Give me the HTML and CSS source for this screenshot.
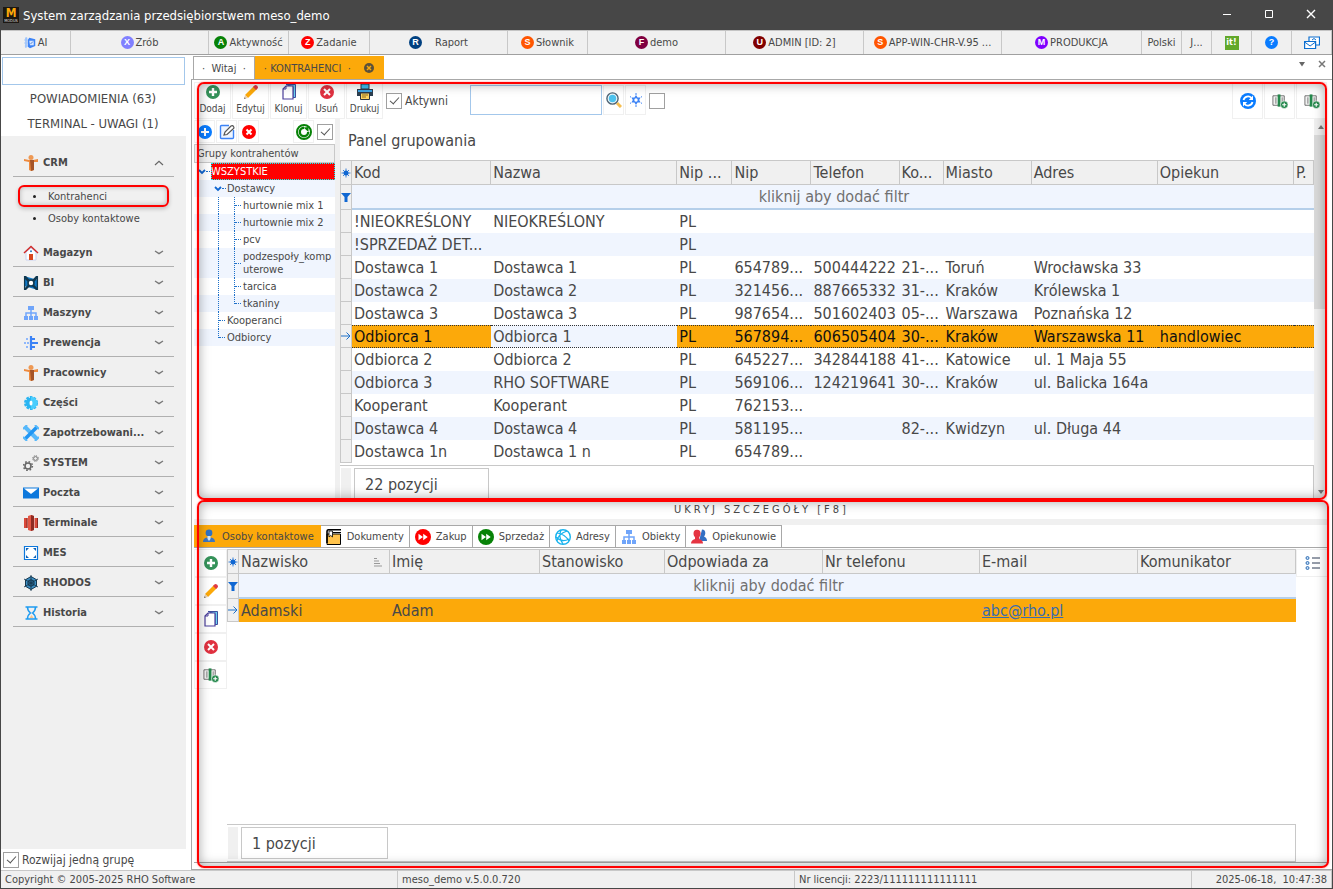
FILE: index.html
```
<!DOCTYPE html>
<html lang="pl">
<head>
    <meta charset="UTF-8">
    <meta name="viewport" content="width=device-width, initial-scale=1.0">
    <title>System zarządzania przedsiębiorstwem meso_demo</title>
    <link rel="stylesheet" href="styles.css">
</head>
<body>
    <svg class="sprite" aria-hidden="true">
        <symbol id="plus-green" viewBox="0 0 16 16"><circle cx="8" cy="8" r="7" fill="#35925a"/><path d="M8 4v8M4 8h8" stroke="#fff" stroke-width="2.4"/></symbol>
        <symbol id="plus-blue" viewBox="0 0 16 16"><circle cx="8" cy="8" r="7" fill="#0a7cff"/><path d="M8 4v8M4 8h8" stroke="#fff" stroke-width="2"/></symbol>
        <symbol id="cross-red" viewBox="0 0 16 16"><circle cx="8" cy="8" r="7" fill="#e03140"/><path d="M5 5l6 6M11 5l-6 6" stroke="#fff" stroke-width="2"/></symbol>
        <symbol id="cross-pure" viewBox="0 0 16 16"><circle cx="8" cy="8" r="7" fill="#f00"/><path d="M5.5 5.5l5 5M10.500 5.500l-5 5" stroke="#fff" stroke-width="2"/></symbol>
        <symbol id="pencil" viewBox="0 0 16 16"><path d="M2 11L11 2l3 3-9 9z" fill="#fca90a"/><path d="M10 3l2-2q3 0 3 3l-2 2z" fill="#e03a44"/><path d="M2 11l3 3-4 1z" fill="#ead0b0"/><path d="M1 15l.6-1.800 1.200 1.200z" fill="#666"/></symbol>
        <symbol id="copy" viewBox="0 0 16 16"><path d="M5 .500h9.500v13H12V3z" fill="#6cd3f0" stroke="#3d4f9f"/><path d="M2 5l3-3h7v13H2z" fill="#fff" stroke="#4b3f9b" stroke-width="1.200"/><path d="M2 5h3V2" fill="none" stroke="#4b3f9b"/></symbol>
        <symbol id="printer" viewBox="0 0 16 16"><path d="M4 0h8v5H4z" fill="#41bff2" stroke="#2a3440"/><path d="M0 5h16v7H0z" fill="#2c3e50"/><path d="M1 6h14v2H1z" fill="#3da4e4"/><path d="M3.500 9h9v6.500h-9z" fill="#fcd462" stroke="#2a3440"/><path d="M5 11h6M5 13h4" stroke="#8b6c20"/></symbol>
        <symbol id="search" viewBox="0 0 16 16"><path d="M11 11l4 4" stroke="#f6be4f" stroke-width="3"/><circle cx="6.500" cy="6.500" r="5.600" fill="#e9f5fa" stroke="#4f6475" stroke-width="1.400"/><circle cx="6.500" cy="6.500" r="3.700" fill="#4cc2ee"/></symbol>
        <symbol id="star" viewBox="0 0 16 16"><path d="M8 3l1.600 2.400h3L11.200 8l1.400 2.600h-3L8 13l-1.600-2.400h-3L4.800 8 3.400 5.400h3z" fill="#3c83f6"/><circle cx="8" cy="8" r="1.700" fill="#fff"/><path d="M8 1v2M8 13v2M2 4.500l1 .7M14 4.500l-1 .7M2 11.500l1-.7M14 11.500l-1-.7" stroke="#3c83f6"/></symbol>
        <symbol id="sync" viewBox="0 0 16 16"><circle cx="8" cy="8" r="8" fill="#0a7cff"/><path d="M3.500 7a4.600 4.600 0 0 1 8-2M12.500 9a4.600 4.600 0 0 1-8 2" fill="none" stroke="#fff" stroke-width="1.800"/><path d="M13 2.500V7H8.800zM3 13.500V9h4.200z" fill="#fff"/></symbol>
        <symbol id="refresh" viewBox="0 0 16 16"><circle cx="8" cy="8" r="7" fill="#fff" stroke="#078207" stroke-width="2"/><path d="M8 3.800A4.200 4.200 0 1 0 12.200 8" fill="none" stroke="#078207" stroke-width="2.400"/><path d="M7.500 3.500L12.500 3v5z" fill="#078207"/></symbol>
        <symbol id="columns" viewBox="0 0 17 16"><path d="M1 2.500h12v10H1z" fill="#fff" stroke="#666"/><path d="M3 4h2v7H3zM10 4h2v7h-2z" fill="#aaa"/><path d="M6 1h3v13H6z" fill="#24884c"/><circle cx="13" cy="12" r="4" fill="#24884c" stroke="#fff" stroke-width=".6"/><path d="M13 9.800v4.400M10.800 12h4.400" stroke="#fff" stroke-width="1.200"/></symbol>
        <symbol id="edit-box" viewBox="0 0 16 16"><path d="M14.500 6v7.500q0 1-1 1h-11q-1 0-1-1v-11q0-1 1-1H10" fill="#eef5ff" stroke="#3c83f6" stroke-width="1.400"/><path d="M5 11l1-3 6-6q1.500-1 2.500.500t-.500 2.500L8 10.500z" fill="#fff" stroke="#555" stroke-width="1.200"/></symbol>
        <symbol id="burst" viewBox="0 0 10 10"><circle cx="5" cy="5" r="2.500" fill="#1067d2"/><path d="M5 .500v9M.5 5h9M2 2l6 6M8 2l-6 6" stroke="#1067d2" stroke-width=".8"/></symbol>
        <symbol id="funnel" viewBox="0 0 10 10"><path d="M0 1h10L6.500 5v5h-3V5z" fill="#1067d2"/></symbol>
        <symbol id="arrow" viewBox="0 0 10 10"><path d="M0 5h9M5.500 1.500L9 5 5.500 8.500" fill="none" stroke="#1d70c9"/></symbol>
        <symbol id="down" viewBox="0 0 10 6"><path d="M1 1l4 2.600L9 1" fill="none" stroke="#777" stroke-width="1.300"/></symbol>
        <symbol id="up" viewBox="0 0 10 6"><path d="M1 5l4-3.600L9 5" fill="none" stroke="#666" stroke-width="1.200"/></symbol>
        <symbol id="node" viewBox="0 0 8 6"><path d="M1 1l3 3 3-3" fill="none" stroke="#1067d2" stroke-width="1.800"/></symbol>
        <symbol id="person" viewBox="0 0 16 16"><circle cx="8" cy="2.500" r="2.500" fill="#ee9853"/><path d="M1 4l5 1h4l5-1v3h-4v8l-3 1-2-1V7l-5-1z" fill="#ee8a3e"/><path d="M7 5h4v10l-3 1z" fill="#a55428"/></symbol>
        <symbol id="house" viewBox="0 0 16 16"><path d="M3 7v8h10V7L8 3z" fill="#fff" stroke="#c9d2f0"/><path d="M1 8l7-6.500L15 8" fill="none" stroke="#cf2b2b" stroke-width="1.500"/><path d="M6 9h4v6H6z" fill="#d9471f"/><circle cx="8" cy="6.300" r="1" fill="#2a7ec2"/></symbol>
        <symbol id="bi" viewBox="0 0 16 16"><path d="M1 1l14 4v10L1 11z" fill="#0f79c7"/><path d="M1 1h2l12 13v1h-2L1 3zM15 1h-2L1 14v1h2L15 3z" fill="#10384f"/><circle cx="8" cy="8" r="3" fill="#fff" stroke="#10384f" stroke-width="1.600"/><path d="M1.600 1v14M14.400 1v14" stroke="#10384f" stroke-width="1.300"/></symbol>
        <symbol id="orgtree" viewBox="0 0 16 16"><path d="M5 1h6v4H5zM1 11h4v4H1zM6 11h4v4H6zM11 11h4v4h-4z" fill="#70a5fa"/><path d="M8 5v6M3 11V8h10v3" fill="none" stroke="#70a5fa" stroke-width="1.500"/></symbol>
        <symbol id="flow" viewBox="0 0 16 16"><path d="M8 1v14M8 8h7M8 4h4M8 12h4" stroke="#3c83f6" stroke-width="2.200"/><path d="M1 8h5M3 4h3M3 12h3" stroke="#8fb8fb" stroke-width="2" stroke-dasharray="2 1"/></symbol>
        <symbol id="gear" viewBox="0 0 16 16"><circle cx="8" cy="8" r="5.500" fill="#2ab5f2" stroke="#2ab5f2" stroke-width="3" stroke-dasharray="2.400 1.056"/><path d="M8 1.800a6.200 6.200 0 0 1 0 12.400z" fill="#4acdfd"/><ellipse cx="8" cy="8" rx="1.500" ry="2.500" fill="#fff"/></symbol>
        <symbol id="tools" viewBox="0 0 16 16"><path d="M2 2l12 12" stroke="#56b8fb" stroke-width="4"/><path d="M14 2L2 14" stroke="#2196f3" stroke-width="3.600"/><path d="M0 4l4-4M12 16l4-4M12 0l4 4M0 12l4 4" stroke="#56b8fb" stroke-width="2"/></symbol>
        <symbol id="cogs" viewBox="0 0 16 16"><circle cx="5" cy="11" r="3" fill="none" stroke="#666" stroke-width="1.600"/><circle cx="5" cy="11" r="4.400" fill="none" stroke="#666" stroke-width="1.500" stroke-dasharray="1.600 1.860"/><circle cx="12.500" cy="3.500" r="1.900" fill="none" stroke="#777"/><circle cx="12.500" cy="3.500" r="2.900" fill="none" stroke="#777" stroke-dasharray="1.100 1.180"/></symbol>
        <symbol id="mail" viewBox="0 0 16 16"><path d="M0 2.500h16v11H0z" fill="#0d78dc"/><path d="M1 3.500h14L8 9z" fill="#fff"/></symbol>
        <symbol id="servers" viewBox="0 0 16 16"><path d="M1 3h3.500v10H1zM11.500 3H15v10h-3.500z" fill="#d9493a"/><path d="M5 1l3-1 3 1v14l-3 1-3-1z" fill="#e35745"/><path d="M8 0l3 1v14l-3 1zM3.500 3h1v10h-1zM14 3h1v10h-1z" fill="#8e2b22"/></symbol>
        <symbol id="mes" viewBox="0 0 16 16"><path d="M1.500 1.500h13v13h-13z" fill="#fff" stroke="#0d78dc" stroke-width="1.200"/><path d="M3 6V3h3zM13 6V3h-3zM3 10v3h3zM13 10v3h-3z" fill="#0d62b8"/></symbol>
        <symbol id="wheel" viewBox="0 0 16 16"><path d="M8 1.500l5.500 3.200v6.600L8 14.500l-5.500-3.200V4.700z" fill="#3d8fc4" stroke="#16384f"/><circle cx="8" cy="8" r="3.200" fill="#2a668e" stroke="#16384f"/><path d="M8 0v16M1 4l14 8M15 4L1 12" stroke="#16384f" stroke-width=".9"/></symbol>
        <symbol id="hourglass" viewBox="0 0 16 16"><path d="M2.500 2h12M2.500 14h12M4.500 2q0 4 3 6-3 2-3 6M12.500 2q0 4-3 6 3 2 3 6" fill="none" stroke="#1e9bf0" stroke-width="1.500"/><path d="M8.500 10l2 3h-4z" fill="#f9c48b"/></symbol>
        <symbol id="user" viewBox="0 0 16 16"><circle cx="8" cy="4" r="3.400" fill="#2f72c4"/><path d="M2 13q0-4 4-4.500l2 1.500 2-1.500q4 .500 4 4.500z" fill="#3e77bf"/><path d="M6.500 7h3v3L8 12l-1.500-2z" fill="#d6e6f7"/></symbol>
        <symbol id="folder" viewBox="0 0 16 16"><path d="M1 5h13.500v10.500H1z" fill="#ffc34c" stroke="#000"/><path d="M1 14V2.500Q1 .700 3 .700h12" fill="none" stroke="#000" stroke-width="1.600"/><path d="M7 3.500h8" stroke="#000"/><path d="M3 2h3.500v6L4.700 6.500 3 8z" fill="#fff" stroke="#000" stroke-width=".8"/></symbol>
        <symbol id="ff" viewBox="0 0 16 16"><circle cx="8" cy="8" r="8" fill="currentColor"/><path d="M3.500 4.800L8 8l-4.500 3.200zM8.200 4.800L12.700 8l-4.500 3.200z" fill="#fff"/></symbol>
        <symbol id="globe" viewBox="0 0 16 16"><circle cx="8" cy="8" r="7.300" fill="#fff" stroke="#18b3ee" stroke-width="1.400"/><path d="M2 4q8 1 12 8M2 12Q3 5 12 2M6 1q-3 7 2 14M1 8q6 6 13 2" fill="none" stroke="#18b3ee" stroke-width="1.200"/></symbol>
        <symbol id="people" viewBox="0 0 16 16"><path d="M11 .5q3.500 0 3.300 4-.2 2-1.300 3 3 1 3 4.500H8z" fill="#3470c4"/><path d="M6 .8q3.800 0 3.600 4.200-.2 2-1.400 3.200V10q3.800 1 3.800 4.500H0Q0 11 4 10V8.200Q2.600 7 2.500 5 2.400.800 6 .800z" fill="#e53442"/></symbol>
        <symbol id="list" viewBox="0 0 16 16"><g fill="#bcd9f5" stroke="#3571b5"><circle cx="2.500" cy="3" r="1.500"/><circle cx="2.500" cy="8" r="1.500"/><circle cx="2.500" cy="13" r="1.500"/></g><path d="M7 3h8M7 8h8M7 13h8" stroke="#2c3b55"/></symbol>
        <symbol id="cube" viewBox="0 0 16 16"><path d="M7 1l8 2v9l-7 3-3-2V4z" fill="#3c83f6"/><path d="M2 1h2L3 14H2zM0 4h5M0 8h5M1 12h4" stroke="#9cc3fb" fill="#9cc3fb"/><path d="M7 5h6v6H8z" fill="#d6e6ff"/><path d="M8.500 9.500L12 6" stroke="#2462cc"/></symbol>
        <symbol id="mails" viewBox="0 0 16 16"><path d="M5 6V2h10.500v8H12" fill="#fff" stroke="#0d6fd0" stroke-width="1.200"/><path d="M.6 6.500h11v7H.600z" fill="#fff" stroke="#0d6fd0" stroke-width="1.200"/><path d="M.6 7l5.500 4 5.500-4M8 5l2-1.500L12 5" fill="none" stroke="#0d6fd0"/></symbol>
        <symbol id="sort" viewBox="0 0 10 10"><path d="M1 1.500h3M1 4h5M1 6.500h6M1 9h8" stroke="#999"/></symbol>
    </svg>

    <header class="titlebar">
        <span class="logo"><b>M</b><i>MODUS</i></span>
        <h1>System zarządzania przedsiębiorstwem meso_demo</h1>
        <div class="window-buttons">
            <button type="button" aria-label="Minimalizuj"><svg viewBox="0 0 10 10"><path d="M1 5.500h8" stroke="#fff"/></svg></button>
            <button type="button" aria-label="Maksymalizuj"><svg viewBox="0 0 10 10"><path d="M1.500 1.500h7v7h-7z" fill="none" stroke="#fff"/></svg></button>
            <button type="button" aria-label="Zamknij"><svg viewBox="0 0 10 10"><path d="M1 1l8 8M9 1l-8 8" stroke="#fff" stroke-width="1.400"/></svg></button>
        </div>
    </header>

    <nav class="menubar">
        <button type="button"><svg class="icon small"><use href="#cube"/></svg>AI</button>
        <button type="button"><span class="badge violet">X</span>Zrób</button>
        <button type="button"><span class="badge green">A</span>Aktywność</button>
        <button type="button"><span class="badge red">Z</span>Zadanie</button>
        <button type="button" class="wide-gap"><span class="badge navy">R</span>Raport</button>
        <button type="button"><span class="badge orange">S</span>Słownik</button>
        <button type="button"><span class="badge plum">F</span>demo</button>
        <button type="button"><span class="badge maroon">U</span>ADMIN [ID: 2]</button>
        <button type="button"><span class="badge orange">S</span>APP-WIN-CHR-V.95 ...</button>
        <button type="button"><span class="badge purple">M</span>PRODUKCJA</button>
        <button type="button">Polski</button>
        <button type="button">J...</button>
        <button type="button"><span class="it-logo">it!</span></button>
        <button type="button"><span class="badge blue">?</span></button>
        <button type="button" aria-label="Wiadomości"><svg class="icon"><use href="#mails"/></svg></button>
    </nav>

    <div class="workspace">
        <aside class="sidebar">
            <input type="text" class="side-search" aria-label="Szukaj w menu">
            <a href="#" class="notice">POWIADOMIENIA (63)</a>
            <a href="#" class="notice">TERMINAL - UWAGI (1)</a>
            <nav class="side-nav">
                <button type="button" class="group"><svg class="icon"><use href="#person"/></svg><span>CRM</span><svg class="chevron"><use href="#up"/></svg></button>
                <ul class="subnav">
                    <li class="marked"><a href="#">Kontrahenci</a></li>
                    <li><a href="#">Osoby kontaktowe</a></li>
                </ul>
                <button type="button" class="group"><svg class="icon"><use href="#house"/></svg><span>Magazyn</span><svg class="chevron"><use href="#down"/></svg></button>
                <button type="button" class="group"><svg class="icon"><use href="#bi"/></svg><span>BI</span><svg class="chevron"><use href="#down"/></svg></button>
                <button type="button" class="group"><svg class="icon"><use href="#orgtree"/></svg><span>Maszyny</span><svg class="chevron"><use href="#down"/></svg></button>
                <button type="button" class="group"><svg class="icon"><use href="#flow"/></svg><span>Prewencja</span><svg class="chevron"><use href="#down"/></svg></button>
                <button type="button" class="group"><svg class="icon"><use href="#person"/></svg><span>Pracownicy</span><svg class="chevron"><use href="#down"/></svg></button>
                <button type="button" class="group"><svg class="icon"><use href="#gear"/></svg><span>Części</span><svg class="chevron"><use href="#down"/></svg></button>
                <button type="button" class="group"><svg class="icon"><use href="#tools"/></svg><span>Zapotrzebowani...</span><svg class="chevron"><use href="#down"/></svg></button>
                <button type="button" class="group"><svg class="icon"><use href="#cogs"/></svg><span>SYSTEM</span><svg class="chevron"><use href="#down"/></svg></button>
                <button type="button" class="group"><svg class="icon"><use href="#mail"/></svg><span>Poczta</span><svg class="chevron"><use href="#down"/></svg></button>
                <button type="button" class="group"><svg class="icon"><use href="#servers"/></svg><span>Terminale</span><svg class="chevron"><use href="#down"/></svg></button>
                <button type="button" class="group"><svg class="icon"><use href="#mes"/></svg><span>MES</span><svg class="chevron"><use href="#down"/></svg></button>
                <button type="button" class="group"><svg class="icon"><use href="#wheel"/></svg><span>RHODOS</span><svg class="chevron"><use href="#down"/></svg></button>
                <button type="button" class="group"><svg class="icon"><use href="#hourglass"/></svg><span>Historia</span><svg class="chevron"><use href="#down"/></svg></button>
            </nav>
            <div class="expand-one"><input type="checkbox" id="expandOne" checked><label for="expandOne">Rozwijaj jedną grupę</label></div>
        </aside>

        <main class="content">
            <div class="doc-tabs">
                <button type="button" class="doc-tab">·&nbsp; Witaj &nbsp;·</button>
                <button type="button" class="doc-tab active">· KONTRAHENCI &nbsp;·
                    <svg class="tab-close" viewBox="0 0 12 12"><circle cx="6" cy="6" r="5" fill="#5c513a"/><path d="M4 4l4 4M8 4L4 8" stroke="#fca90a" stroke-width="1.500"/></svg>
                </button>
                <div class="doc-tools">
                    <button type="button" aria-label="Lista zakładek"><svg viewBox="0 0 10 10"><path d="M2 3h6L5 7.500z" fill="#666"/></svg></button>
                    <button type="button" aria-label="Zamknij zakładkę"><svg viewBox="0 0 10 10"><path d="M2 2l6 6M8 2L2 8" stroke="#777" stroke-width="1.500"/></svg></button>
                </div>
            </div>

            <div class="doc-body">
                <section class="master">
                    <div class="toolbar">
                        <button type="button" class="tool"><svg class="icon"><use href="#plus-green"/></svg>Dodaj</button>
                        <button type="button" class="tool"><svg class="icon"><use href="#pencil"/></svg>Edytuj</button>
                        <button type="button" class="tool"><svg class="icon"><use href="#copy"/></svg>Klonuj</button>
                        <button type="button" class="tool"><svg class="icon"><use href="#cross-red"/></svg>Usuń</button>
                        <button type="button" class="tool"><svg class="icon"><use href="#printer"/></svg>Drukuj</button>
                        <div class="active-only"><input type="checkbox" id="activeOnly" checked><label for="activeOnly">Aktywni</label></div>
                        <input type="text" class="find" aria-label="Szukaj">
                        <button type="button" class="find-btn" aria-label="Szukaj"><svg class="icon"><use href="#search"/></svg></button>
                        <button type="button" class="find-btn" aria-label="Oznacz"><svg class="icon"><use href="#star"/></svg></button>
                        <input type="checkbox" class="extra-check" aria-label="Dokładne wyszukiwanie">
                        <div class="toolbar-right">
                            <button type="button" aria-label="Odśwież"><svg class="icon"><use href="#sync"/></svg></button>
                            <button type="button" aria-label="Kolumny"><svg class="icon"><use href="#columns"/></svg></button>
                            <button type="button" aria-label="Dodaj kolumnę"><svg class="icon"><use href="#columns"/></svg></button>
                        </div>
                    </div>

                    <div class="master-body">
                        <div class="tree-pane">
                            <div class="tree-tools">
                                <button type="button" aria-label="Dodaj grupę"><svg class="icon"><use href="#plus-blue"/></svg></button>
                                <button type="button" aria-label="Edytuj grupę"><svg class="icon"><use href="#edit-box"/></svg></button>
                                <button type="button" aria-label="Usuń grupę"><svg class="icon"><use href="#cross-pure"/></svg></button>
                                <button type="button" class="push" aria-label="Odśwież grupy"><svg class="icon"><use href="#refresh"/></svg></button>
                                <input type="checkbox" aria-label="Pokaż grupy" checked>
                            </div>
                            <div class="tree-head">Grupy kontrahentów</div>
                            <ul class="tree">
                                <li class="root"><svg class="node"><use href="#node"/></svg><i class="tick"></i><span>WSZYSTKIE</span></li>
                                <li class="second"><svg class="node"><use href="#node"/></svg><i class="tick"></i><span>Dostawcy</span></li>
                                <li><i class="guide"></i><i class="line"></i><i class="tick"></i><span>hurtownie mix 1</span></li>
                                <li><i class="guide"></i><i class="line"></i><i class="tick"></i><span>hurtownie mix 2</span></li>
                                <li><i class="guide"></i><i class="line"></i><i class="tick"></i><span>pcv</span></li>
                                <li><i class="guide"></i><i class="line"></i><i class="tick"></i><span>podzespoły_komp<br>uterowe</span></li>
                                <li><i class="guide"></i><i class="line"></i><i class="tick"></i><span>tarcica</span></li>
                                <li><i class="guide"></i><i class="line end"></i><i class="tick"></i><span>tkaniny</span></li>
                                <li><i class="line"></i><i class="tick"></i><span>Kooperanci</span></li>
                                <li><i class="line end"></i><i class="tick"></i><span>Odbiorcy</span></li>
                            </ul>
                        </div>

                        <div class="grid-pane">
                            <div class="group-panel">Panel grupowania</div>
                            <table class="grid">
                                <colgroup>
                                    <col class="w-mark"><col class="w-kod"><col class="w-nazwa"><col class="w-nippl"><col class="w-nip"><col class="w-tel"><col class="w-kod-p"><col class="w-miasto"><col class="w-adres"><col class="w-opiekun"><col class="w-p">
                                </colgroup>
                                <thead>
                                    <tr><th><svg class="mark"><use href="#burst"/></svg></th><th>Kod</th><th>Nazwa</th><th>Nip ...</th><th>Nip</th><th>Telefon</th><th>Ko...</th><th>Miasto</th><th>Adres</th><th>Opiekun</th><th>P.</th></tr>
                                    <tr class="filter"><td><svg class="mark"><use href="#funnel"/></svg></td><td colspan="10">kliknij aby dodać filtr</td></tr>
                                </thead>
                                <tbody>
                                    <tr><td></td><td>!NIEOKREŚLONY</td><td>NIEOKREŚLONY</td><td>PL</td><td></td><td></td><td></td><td></td><td></td><td></td><td></td></tr>
                                    <tr><td></td><td>!SPRZEDAŻ DET...</td><td></td><td>PL</td><td></td><td></td><td></td><td></td><td></td><td></td><td></td></tr>
                                    <tr><td></td><td>Dostawca 1</td><td>Dostawca 1</td><td>PL</td><td>654789...</td><td>500444222</td><td>21-...</td><td>Toruń</td><td>Wrocławska 33</td><td></td><td></td></tr>
                                    <tr><td></td><td>Dostawca 2</td><td>Dostawca 2</td><td>PL</td><td>321456...</td><td>887665332</td><td>31-...</td><td>Kraków</td><td>Królewska 1</td><td></td><td></td></tr>
                                    <tr><td></td><td>Dostawca 3</td><td>Dostawca 3</td><td>PL</td><td>987654...</td><td>501602403</td><td>05-...</td><td>Warszawa</td><td>Poznańska 12</td><td></td><td></td></tr>
                                    <tr class="selected focus"><td><svg class="mark"><use href="#arrow"/></svg></td><td>Odbiorca 1</td><td class="editing">Odbiorca 1</td><td>PL</td><td>567894...</td><td>606505404</td><td>30-...</td><td>Kraków</td><td>Warszawska 11</td><td>handlowiec</td><td></td></tr>
                                    <tr><td></td><td>Odbiorca 2</td><td>Odbiorca 2</td><td>PL</td><td>645227...</td><td>342844188</td><td>41-...</td><td>Katowice</td><td>ul. 1 Maja 55</td><td></td><td></td></tr>
                                    <tr><td></td><td>Odbiorca 3</td><td>RHO SOFTWARE</td><td>PL</td><td>569106...</td><td>124219641</td><td>30-...</td><td>Kraków</td><td>ul. Balicka 164a</td><td></td><td></td></tr>
                                    <tr><td></td><td>Kooperant</td><td>Kooperant</td><td>PL</td><td>762153...</td><td></td><td></td><td></td><td></td><td></td><td></td></tr>
                                    <tr><td></td><td>Dostawca 4</td><td>Dostawca 4</td><td>PL</td><td>581195...</td><td></td><td>82-...</td><td>Kwidzyn</td><td>ul. Długa 44</td><td></td><td></td></tr>
                                    <tr><td></td><td>Dostawca 1n</td><td>Dostawca 1 n</td><td>PL</td><td>654789...</td><td></td><td></td><td></td><td></td><td></td><td></td></tr>
                                </tbody>
                            </table>
                            <div class="grid-foot"><span class="count">22 pozycji</span></div>
                        </div>

                        <div class="scrollbar">
                            <svg viewBox="0 0 10 10"><path d="M2 7h6L5 3z" fill="#777"/></svg>
                            <div class="thumb"></div>
                            <svg viewBox="0 0 10 10"><path d="M2 3h6L5 7z" fill="#777"/></svg>
                        </div>
                    </div>
                    <div class="frame"></div>
                </section>

                <section class="detail">
                    <button type="button" class="toggle-detail">UKRYJ SZCZEGÓŁY [F8]</button>
                    <div class="detail-tabs">
                        <button type="button" class="active"><svg class="icon"><use href="#user"/></svg>Osoby kontaktowe</button>
                        <button type="button"><svg class="icon"><use href="#folder"/></svg>Dokumenty</button>
                        <button type="button"><svg class="icon buy"><use href="#ff"/></svg>Zakup</button>
                        <button type="button"><svg class="icon sell"><use href="#ff"/></svg>Sprzedaż</button>
                        <button type="button"><svg class="icon"><use href="#globe"/></svg>Adresy</button>
                        <button type="button"><svg class="icon"><use href="#orgtree"/></svg>Obiekty</button>
                        <button type="button"><svg class="icon"><use href="#people"/></svg>Opiekunowie</button>
                    </div>
                    <div class="detail-body">
                        <div class="side-tools">
                            <button type="button" aria-label="Dodaj"><svg class="icon"><use href="#plus-green"/></svg></button>
                            <button type="button" aria-label="Edytuj"><svg class="icon"><use href="#pencil"/></svg></button>
                            <button type="button" aria-label="Klonuj"><svg class="icon"><use href="#copy"/></svg></button>
                            <button type="button" aria-label="Usuń"><svg class="icon"><use href="#cross-red"/></svg></button>
                            <button type="button" aria-label="Kolumny"><svg class="icon"><use href="#columns"/></svg></button>
                        </div>
                        <div class="contacts">
                            <table class="grid">
                                <colgroup>
                                    <col class="w-mark"><col class="w-nazwisko"><col class="w-imie"><col class="w-stan"><col class="w-odp"><col class="w-nr"><col class="w-mail"><col class="w-kom">
                                </colgroup>
                                <thead>
                                    <tr><th><svg class="mark"><use href="#burst"/></svg></th><th><div class="sorted">Nazwisko<svg class="mark"><use href="#sort"/></svg></div></th><th>Imię</th><th>Stanowisko</th><th>Odpowiada za</th><th>Nr telefonu</th><th>E-mail</th><th>Komunikator</th></tr>
                                    <tr class="filter"><td><svg class="mark"><use href="#funnel"/></svg></td><td colspan="7">kliknij aby dodać filtr</td></tr>
                                </thead>
                                <tbody>
                                    <tr class="selected soft"><td><svg class="mark"><use href="#arrow"/></svg></td><td>Adamski</td><td>Adam</td><td></td><td></td><td></td><td><a href="mailto:abc@rho.pl">abc@rho.pl</a></td><td></td></tr>
                                </tbody>
                            </table>
                            <div class="grid-foot"><span class="count">1 pozycji</span></div>
                        </div>
                        <div class="right-tools">
                            <button type="button" aria-label="Lista"><svg class="icon"><use href="#list"/></svg></button>
                        </div>
                    </div>
                    <div class="frame"></div>
                </section>
            </div>
        </main>
    </div>

    <footer class="statusbar">
        <span>Copyright © 2005-2025 RHO Software</span>
        <span>meso_demo v.5.0.0.720</span>
        <span>Nr licencji: 2223/111111111111111</span>
        <span class="clock">2025-06-18,&nbsp; 10:47:38</span>
    </footer>
</body>
</html>
```
FILE: styles.css
```
* {
    box-sizing: border-box;
}

body {
    display: flex;
    flex-direction: column;
    height: 100vh;
    margin: 0;
    border: 1px solid #474747;
    border-top: none;
    background-color: #fff;
    color: #484848;
    font-family: "DejaVu Sans Condensed", "Noto Sans", sans-serif;
    font-size: 11px;
    overflow: hidden;
}

button {
    margin: 0;
    padding: 0;
    border: none;
    background: none;
    color: inherit;
    font: inherit;
    cursor: pointer;
}

a {
    color: inherit;
    text-decoration: none;
}

ul {
    margin: 0;
    padding: 0;
    list-style: none;
}

.sprite {
    display: none;
}

.icon {
    flex: none;
    width: 16px;
    height: 16px;
}

.icon.small {
    width: 12px;
    height: 12px;
}

input[type="text"] {
    border: 1px solid #a3c7eb;
    background-color: #fff;
    outline: none;
}

input[type="checkbox"] {
    display: flex;
    flex: none;
    justify-content: center;
    align-items: center;
    appearance: none;
    width: 16px;
    height: 16px;
    margin: 0;
    border: 1px solid #a0a0a0;
    background-color: #fff;
}

input[type="checkbox"]:checked::before {
    content: "";
    width: 8px;
    height: 4px;
    margin-bottom: 3px;
    border-left: 1px solid #555;
    border-bottom: 1px solid #555;
    transform: rotate(-48deg);
}

/* title bar */
.titlebar {
    display: flex;
    flex: none;
    align-items: center;
    height: 30px;
    padding-left: 2px;
    background-color: #474747;
    color: #fff;
}

.titlebar h1 {
    flex: 1;
    margin: 0 0 0 4px;
    font-size: 13px;
    font-weight: normal;
}

.logo {
    display: flex;
    flex-direction: column;
    align-items: center;
    width: 16px;
    height: 16px;
    background-color: #1c1712;
    color: #fca90a;
}

.logo b {
    font-size: 12px;
    line-height: 12px;
}

.logo i {
    color: #ddd;
    font-size: 4px;
    font-style: normal;
    line-height: 4px;
}

.window-buttons {
    display: flex;
}

.window-buttons button {
    width: 42px;
    height: 30px;
}

.window-buttons svg {
    width: 10px;
    height: 10px;
}

/* menu bar */
.menubar {
    display: grid;
    flex: none;
    grid-template-columns: 70fr 138fr 80fr 81fr 138fr 80fr 138fr 138fr 138fr 140fr 40fr 30fr 40fr 40fr 40fr;
    height: 25px;
    border-top: 1px solid #c4c4c4;
    border-bottom: 1px solid #a0a0a0;
    background-color: #f0f0f0;
}

.menubar button {
    display: flex;
    justify-content: center;
    align-items: center;
    gap: 2px;
    min-width: 0;
    border-right: 1px solid #c8c8c8;
    white-space: nowrap;
}

.menubar .wide-gap {
    gap: 13px;
}

.badge {
    flex: none;
    width: 13px;
    height: 13px;
    border-radius: 50%;
    color: #fff;
    font-family: "Liberation Sans", sans-serif;
    font-size: 9px;
    font-weight: bold;
    line-height: 13px;
    text-align: center;
}

.violet { background-color: #8080ff; }
.green { background-color: #078207; }
.red { background-color: #f00; }
.navy { background-color: #004080; }
.orange { background-color: #ff5500; }
.plum { background-color: #800040; }
.maroon { background-color: #800000; }
.purple { background-color: #8000ff; }
.blue { background-color: #0a7cff; }

.it-logo {
    width: 14px;
    height: 14px;
    background-color: #62a82a;
    color: #fff;
    font-size: 9px;
    font-weight: bold;
    line-height: 13px;
}

.workspace {
    display: flex;
    flex: 1;
    min-height: 0;
}

/* sidebar */
.sidebar {
    display: flex;
    flex: none;
    flex-direction: column;
    width: 190px;
}

.side-search {
    flex: none;
    height: 28px;
    margin: 2px 6px 1px 1px;
}

.notice {
    margin-right: 6px;
    font-size: 13px;
    line-height: 25px;
    text-align: center;
}

.side-nav {
    flex: 1;
    margin-right: 5px;
    padding: 11px 12px 0;
    background-color: #f0f0f0;
}

.group {
    display: flex;
    align-items: center;
    gap: 4px;
    width: 100%;
    height: 30px;
    padding: 2px 10px 0;
    border-bottom: 1px solid #b0b0b0;
    font-weight: bold;
    text-align: left;
    white-space: nowrap;
}

.group span {
    flex: 1;
}

.chevron {
    width: 10px;
    height: 6px;
}

.subnav {
    padding: 8px 5px;
}

.subnav li {
    display: flex;
    align-items: center;
    height: 22px;
    padding-left: 13px;
    border: 2px solid transparent;
    border-radius: 6px;
}

.subnav li::before {
    content: "";
    width: 3px;
    height: 3px;
    margin-right: 12px;
    border-radius: 50%;
    background-color: #222;
}

.subnav .marked {
    border-color: #f00;
    box-shadow: inset 0 0 5px rgba(0, 0, 0, 0.25), 0 2px 4px rgba(0, 0, 0, 0.2);
}

.expand-one {
    display: flex;
    flex: none;
    align-items: center;
    gap: 3px;
    height: 21px;
    padding-left: 2px;
    font-size: 12px;
}

/* document tabs */
.content {
    display: flex;
    flex: 1;
    flex-direction: column;
    min-width: 0;
}

.doc-tabs {
    display: flex;
    flex: none;
    height: 24px;
    padding: 1px 0 0 2px;
}

.doc-tab {
    padding: 0 8px;
    border: 1px solid #a8a8a8;
    border-bottom: none;
}

.doc-tab.active {
    display: flex;
    align-items: center;
    gap: 12px;
    border-color: #fca90a;
    background-color: #fca90a;
}

.tab-close {
    width: 12px;
    height: 12px;
}

.doc-tools {
    display: flex;
    gap: 10px;
    margin: 3px 5px 0 auto;
}

.doc-tools button,
.doc-tools svg {
    width: 10px;
    height: 10px;
}

.doc-body {
    display: flex;
    flex: 1;
    flex-direction: column;
    min-height: 0;
    padding: 2px 5px 6px 2px;
    border: 1px solid #a8a8a8;
    border-right: none;
}

.frame {
    position: absolute;
    inset: 0 0 0 3px;
    border: 2px solid #f00;
    border-radius: 7px;
    box-shadow: inset 0 0 12px rgba(0, 0, 0, 0.35), 0 0 2px rgba(255, 0, 0, 0.5);
    pointer-events: none;
}

.master {
    position: relative;
    flex: none;
}

.toolbar {
    display: flex;
    gap: 1px;
    height: 37px;
}

.tool {
    display: flex;
    flex-direction: column;
    align-items: center;
    width: 37px;
    height: 37px;
    padding-top: 1px;
    border: 1px solid #f0f0f0;
    font-size: 10px;
    line-height: 18px;
}

.active-only {
    display: flex;
    align-items: center;
    gap: 3px;
    width: 85px;
    padding-left: 2px;
    font-size: 12px;
}

.find {
    width: 132px;
    height: 30px;
    margin-top: 3px;
}

.find-btn {
    display: flex;
    justify-content: center;
    align-items: center;
    width: 21px;
    height: 30px;
    margin-top: 3px;
    border: 1px solid #f0f0f0;
}

.toolbar .extra-check {
    align-self: center;
    margin-left: 2px;
}

.toolbar-right {
    display: flex;
    gap: 1px;
    margin-left: auto;
}

.toolbar-right button {
    display: flex;
    justify-content: center;
    align-items: center;
    width: 31px;
    height: 37px;
    border: 1px solid #f0f0f0;
}

.master-body {
    display: flex;
}

/* group tree */
.tree-pane {
    flex: none;
    width: 146px;
    border-right: 5px solid #f0f0f0;
}

.tree-tools {
    display: flex;
    align-items: center;
    gap: 1px;
    height: 25px;
    padding-right: 2px;
}

.tree-tools button {
    display: flex;
    justify-content: center;
    align-items: center;
    width: 21px;
    height: 23px;
    border: 1px solid #f0f0f0;
}

.tree-tools .push {
    margin: 0 2px 0 auto;
}

.tree-head {
    height: 19px;
    padding-left: 2px;
    border: 1px solid #c8c8c8;
    background-color: #f0f0f0;
    line-height: 18px;
}

.tree li {
    display: flex;
    min-height: 17px;
    padding-left: 24px;
    line-height: 13px;
}

.tree li:nth-child(even) {
    background-color: #f0f5fe;
}

.tree li span {
    padding: 2px 0;
}

.tree .root {
    padding-left: 4px;
}

.tree .second {
    padding-left: 20px;
}

.tree .root span {
    flex: 1;
    outline: 1px dotted #0ff;
    outline-offset: -1px;
    background-color: #f00;
    color: #fff;
}

.node {
    align-self: center;
    width: 8px;
    height: 6px;
}

.guide {
    width: 16px;
    border-left: 1px dotted #1d70c9;
}

.line {
    border-left: 1px dotted #1d70c9;
}

.line.end {
    height: 9px;
}

.tick {
    align-self: center;
    width: 6px;
    margin-right: 2px;
    border-top: 1px dotted #1d70c9;
}

.root .tick,
.second .tick {
    width: 4px;
    margin-right: 1px;
}

/* data grids */
.grid-pane {
    flex: 1;
    min-width: 0;
}

.group-panel {
    height: 41px;
    padding-left: 8px;
    font-size: 16px;
    line-height: 43px;
}

.grid {
    width: 100%;
    border-spacing: 0;
    table-layout: fixed;
    font-size: 16px;
}

.grid th,
.grid td {
    height: 23px;
    padding: 0 0 0 2px;
    overflow: hidden;
    font-weight: normal;
    line-height: 22px;
    text-align: left;
    white-space: nowrap;
}

.grid th {
    height: 25px;
    border: 1px solid #c8c8c8;
    border-left: none;
    background-color: #f0f0f0;
}

.grid tr > :first-child {
    padding: 0;
    border: 1px solid #c8c8c8;
    border-top: none;
    background-color: #f0f0f0;
    text-align: center;
}

.grid thead tr:first-child > :first-child {
    border-top: 1px solid #c8c8c8;
}

.grid .filter td {
    height: 25px;
    border-bottom: 2px solid #b5cfea;
    background-color: #f0f5fe;
    color: #707070;
    text-align: center;
}

.grid .filter td:first-child {
    border-bottom: 1px solid #c8c8c8;
    background-color: #f0f0f0;
}

.grid tbody tr:nth-child(even) td {
    background-color: #f0f5fe;
}

.grid tbody tr td:first-child {
    background-color: #f0f0f0;
}

.grid tbody .selected td:not(:first-child) {
    background-color: #fca90a;
    color: #111;
}

.grid tbody .soft td:not(:first-child) {
    color: #484848;
}

.grid tbody .focus td:not(:first-child) {
    border-top: 1px dotted #333;
    border-bottom: 1px dotted #333;
    line-height: 20px;
}

.grid tbody .focus .editing:not(:first-child) {
    background-color: #f0f5fe;
    color: #484848;
}

.grid td a {
    color: #3a6cae;
    text-decoration: underline;
}

.mark {
    display: block;
    width: 10px;
    height: 10px;
    margin: 0 auto;
}

.sorted {
    display: flex;
    align-items: center;
    justify-content: space-between;
    padding-right: 6px;
}

.sorted .mark {
    margin: 0;
}

.w-mark { width: 12px; }
.w-kod { width: 139px; }
.w-nazwa { width: 186px; }
.w-nippl { width: 55px; }
.w-nip { width: 79px; }
.w-tel { width: 88px; }
.w-kod-p { width: 44px; }
.w-miasto { width: 88px; }
.w-adres { width: 126px; }
.w-opiekun { width: 136px; }
.w-p { width: 20px; }
.w-nazwisko { width: 151px; }
.w-imie { width: 150px; }
.w-stan { width: 125px; }
.w-odp { width: 158px; }
.w-nr { width: 157px; }
.w-mail { width: 158px; }
.w-kom { width: 158px; }

.grid-foot {
    display: flex;
    padding: 2px 0 2px 1px;
    border: 1px solid #c8c8c8;
    border-left: none;
}

.grid-foot::before {
    content: "";
    width: 10px;
    margin-right: 3px;
    background-color: #f0f0f0;
}

.count {
    width: 135px;
    height: 32px;
    padding-left: 10px;
    border: 1px solid #c8c8c8;
    font-size: 16px;
    line-height: 31px;
}

.grid-pane .grid-foot {
    margin-top: 2px;
    padding-bottom: 0;
    border-bottom: none;
}

.scrollbar {
    display: flex;
    flex: none;
    flex-direction: column;
    width: 13px;
    background-color: #f0f0f0;
}

.scrollbar svg {
    width: 10px;
    height: 10px;
    margin: 3px 1px 3px auto;
}

.thumb {
    width: 100%;
    height: 174px;
    margin-bottom: auto;
    background-color: #dadada;
}

/* details */
.detail {
    display: flex;
    position: relative;
    flex: 1;
    flex-direction: column;
    min-height: 0;
    margin-right: -2px;
    margin-bottom: -5px;
    padding-bottom: 5px;
}

.toggle-detail {
    flex: none;
    height: 25px;
    border-bottom: 6px solid #f0f0f0;
    letter-spacing: 3px;
}

.detail-tabs {
    display: flex;
    flex: none;
    height: 23px;
    border-bottom: 1px solid #a8a8a8;
}

.detail-tabs button {
    display: flex;
    align-items: center;
    gap: 5px;
    padding: 0 5px;
    border: 1px solid #a8a8a8;
    border-left: none;
    border-bottom: none;
    white-space: nowrap;
}

.detail-tabs .active {
    padding: 0 6px 0 7px;
    border-color: #fca90a;
    background-color: #fca90a;
}

.buy {
    color: #f00;
}

.sell {
    color: #078207;
}

.detail-body {
    display: flex;
    flex: 1;
    min-height: 0;
    padding-top: 1px;
    border-bottom: 1px solid #a8a8a8;
}

.side-tools {
    flex: none;
    width: 33px;
}

.side-tools button,
.right-tools button {
    display: flex;
    justify-content: center;
    align-items: center;
    width: 100%;
    height: 28px;
    border: 1px solid #f0f0f0;
}

.contacts {
    display: flex;
    flex: 1;
    flex-direction: column;
    min-width: 0;
}

.contacts .grid-foot {
    margin-top: auto;
}

.contacts .count {
    width: 147px;
}

.right-tools {
    flex: none;
    width: 33px;
}

/* status bar */
.statusbar {
    display: grid;
    flex: none;
    grid-template-columns: 397fr 397fr 397fr 140fr;
    height: 18px;
    border-top: 1px solid #c8c8c8;
    background-color: #f0f0f0;
    line-height: 17px;
}

.statusbar span {
    padding-left: 4px;
    border-right: 1px solid #c8c8c8;
}

.statusbar .clock {
    padding-right: 4px;
    text-align: right;
}
```
